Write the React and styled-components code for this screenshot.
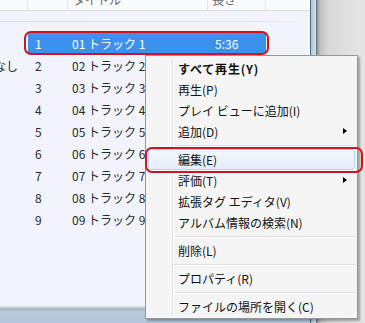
import React from 'react'
import styled, { createGlobalStyle } from 'styled-components'

const GlobalStyle = createGlobalStyle`
	html, body {
		margin: 0;
		padding: 0;
		background: #e2e2e2;
	}
	body {
		font-family: "Noto Sans CJK JP", "Noto Sans", sans-serif;
		font-size: 12px;
	}
`

const COLS = '28px 40px 140px 58px 1fr'

const tracks = [
	{ no: 1, title: '01 トラック 1', length: '5:36' },
	{ no: 2, title: '02 トラック 2', group: 'なし' },
	{ no: 3, title: '03 トラック 3' },
	{ no: 4, title: '04 トラック 4' },
	{ no: 5, title: '05 トラック 5' },
	{ no: 6, title: '06 トラック 6' },
	{ no: 7, title: '07 トラック 7' },
	{ no: 8, title: '08 トラック 8' },
	{ no: 9, title: '09 トラック 9' },
]

const menu = [
	{ label: 'すべて再生(Y)', bold: true },
	{ label: '再生(P)' },
	{ label: 'プレイ ビューに追加(I)' },
	{ label: '追加(D)', sub: true },
	{ sep: true },
	{ label: '編集(E)', hover: true },
	{ label: '評価(T)', sub: true },
	{ label: '拡張タグ エディタ(V)' },
	{ label: 'アルバム情報の検索(N)' },
	{ sep: true },
	{ label: '削除(L)' },
	{ sep: true },
	{ label: 'プロパティ(R)' },
	{ sep: true },
	{ label: 'ファイルの場所を開く(C)' },
]

const Screen = styled.div`
	position: relative;
	width: 365px;
	height: 323px;
	overflow: hidden;
	display: flex;
	background: #e2e2e2;
`

const ListPane = styled.div`
	width: 310px;
	display: flex;
	flex-direction: column;
	background: #f1f5fb;
`

const HeaderRow = styled.div`
	display: grid;
	grid-template-columns: ${COLS};
	height: 10px;
	overflow: hidden;
	background: #fafbfc;
	border-bottom: 1px solid #d9dee4;
	color: #6a6a6a;
`

const HeaderCell = styled.div`
	border-right: ${p => (p.$last ? 'none' : '1px solid #e1e4e8')};
	padding-left: ${p => p.$pad || 0}px;
	line-height: 12px;
	margin-top: -6px;
	white-space: nowrap;
`

const GroupLine = styled.div`
	margin-top: 10px;
	width: 305px;
	height: 1px;
	background: linear-gradient(to right, #d9e0e8, #dde4ec 80%, #eef2f7);
`

const Rows = styled.div`
	margin-top: 10px;
	flex: 1;
`

const Row = styled.div`
	display: grid;
	grid-template-columns: ${COLS};
	height: 22px;
	color: #2a2a2a;
`

const Cell = styled.div`
	display: flex;
	align-items: center;
	margin: 1px 0;
	padding-left: ${p => p.$pad || 0}px;
	white-space: nowrap;
	overflow: hidden;
	background: ${p => (p.$selected ? '#3b92ec' : 'transparent')};
	color: ${p => (p.$selected ? '#ffffff' : 'inherit')};
`

const GroupCell = styled(Cell)`
	text-indent: -6px;
`

const TaskStrip = styled.div`
	height: 17px;
	background: linear-gradient(
		to bottom,
		#dfe4ea 0,
		#c3cbd5 2px,
		#9fafc0 3px,
		#b9c9da 5px,
		#b3c6da 100%
	);
`

const WindowEdge = styled.div`
	width: 5px;
	border-left: 1px solid #5e6b77;
	border-right: 1px solid #6f7378;
	background: linear-gradient(to right, #9fc6de, #cfe6f2);
`

const Desktop = styled.div`
	flex: 1;
	background: linear-gradient(to right, #8f8f8f 0, #c2c2c2 3px, #d8d8d8 12px, #e4e4e4 40px);
`

const Ring = styled.div`
	position: absolute;
	left: ${p => p.$x}px;
	top: ${p => p.$y}px;
	width: ${p => p.$w}px;
	height: ${p => p.$h}px;
	box-sizing: border-box;
	border: 2.5px solid #d0141f;
	border-radius: 7px;
	z-index: 3;
	pointer-events: none;
`

const Menu = styled.div`
	position: absolute;
	left: 145px;
	top: 55px;
	width: 213px;
	box-sizing: border-box;
	padding: 2px 2px 1px;
	background: #f5f5f5;
	border: 1px solid #979797;
	box-shadow: 2px 2px 2px rgba(0, 0, 0, 0.3);
	z-index: 2;
	&::before {
		content: '';
		position: absolute;
		top: 2px;
		bottom: 2px;
		left: 26px;
		width: 1px;
		background: #e2e3e3;
		box-shadow: 1px 0 0 #ffffff;
	}
`

const MenuItem = styled.div`
	position: relative;
	height: 21px;
	display: flex;
	align-items: center;
	padding-left: 30px;
	color: #111;
	font-weight: ${p => (p.$bold ? 700 : 400)};
	letter-spacing: ${p => (p.$bold ? '0.8px' : '0')};
	white-space: nowrap;
	border-radius: 3px;
	box-sizing: border-box;
	${p =>
		p.$hover &&
		`
		background: linear-gradient(to bottom, #f2f7fd, #e4eefa);
		border: 1px solid #b8d4f2;
		padding-left: 29px;
	`}
`

const SubArrow = styled.span`
	position: absolute;
	right: 8px;
	top: 7px;
	width: 0;
	height: 0;
	border-top: 3.5px solid transparent;
	border-bottom: 3.5px solid transparent;
	border-left: 4px solid #000;
`

const Separator = styled.div`
	height: 7px;
	display: flex;
	align-items: center;
	padding-left: 26px;
	&::after {
		content: '';
		flex: 1;
		height: 1px;
		background: #e0e0e0;
		box-shadow: 0 1px 0 #ffffff;
	}
`

function App() {
	return (
		<Screen>
			<GlobalStyle />
			<ListPane>
				<HeaderRow>
					<HeaderCell />
					<HeaderCell />
					<HeaderCell $pad={5}>タイトル</HeaderCell>
					<HeaderCell $pad={4}>長さ</HeaderCell>
					<HeaderCell $last />
				</HeaderRow>
				<GroupLine />
				<Rows>
					{tracks.map(t => {
						const sel = t.no === 1
						return (
							<Row key={t.no}>
								<GroupCell>{t.group}</GroupCell>
								<Cell $pad={7} $selected={sel}>{t.no}</Cell>
								<Cell $pad={4} $selected={sel}>{t.title}</Cell>
								<Cell $pad={7} $selected={sel}>{t.length}</Cell>
								<Cell />
							</Row>
						)
					})}
				</Rows>
				<TaskStrip />
			</ListPane>
			<WindowEdge />
			<Desktop />

			<Ring $x={24} $y={31} $w={245} $h={24} />

			<Menu>
				{menu.map((m, i) =>
					m.sep ? (
						<Separator key={i} />
					) : (
						<MenuItem key={i} $bold={m.bold} $hover={m.hover}>
							{m.label}
							{m.sub && <SubArrow />}
						</MenuItem>
					)
				)}
			</Menu>
			<Ring $x={145} $y={147} $w={218} $h={26} />
		</Screen>
	)
}

export default App
